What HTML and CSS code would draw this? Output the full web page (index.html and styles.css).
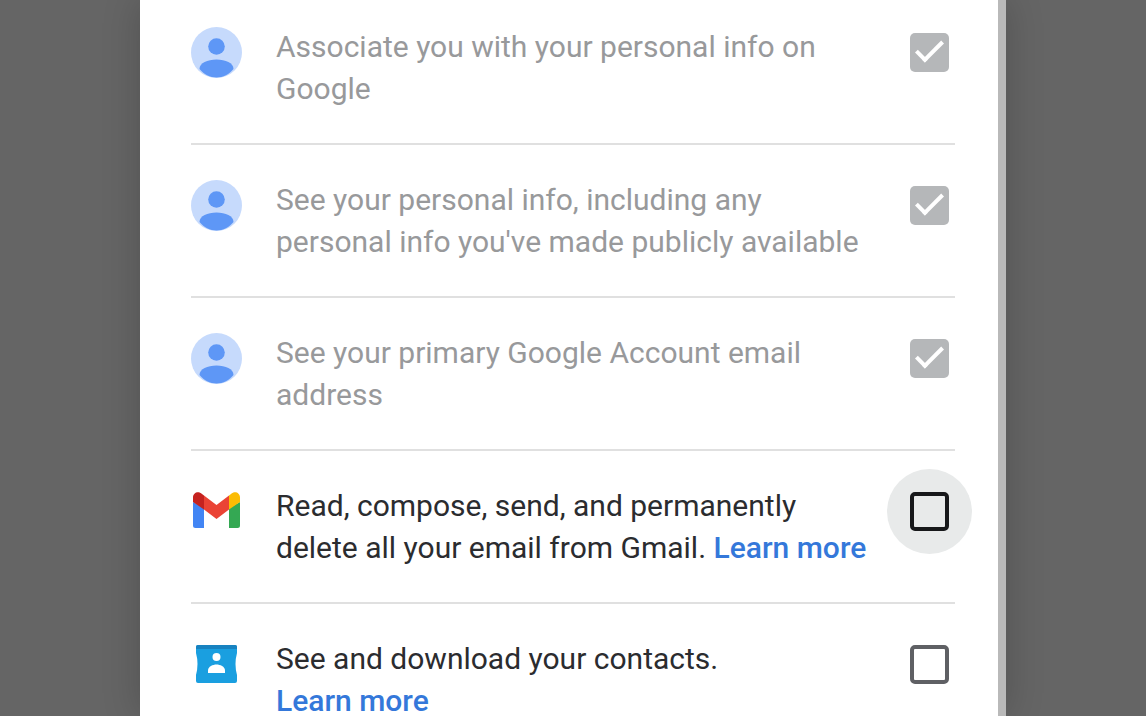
FILE: index.html
```
<!DOCTYPE html>
<html lang="en">
<head>
    <meta charset="UTF-8">
    <meta name="viewport" content="width=device-width, initial-scale=1">
    <title>Google Account access</title>

    <link rel="stylesheet" href="styles.css">

</head>
<body>

    <!-- shared by the three profile rows -->
    <svg class="defs" width="0" height="0" aria-hidden="true">
        <symbol id="icon-person" viewBox="0 0 51 51">
            <circle cx="25.5" cy="25.5" r="25.5" fill="#c6dafc"/>
            <g fill="#5e97f6">
                <circle cx="25.5" cy="19.5" r="8.3"/>
                <path d="M8.500 42c0-6 8-9.500 17-9.500s17 3.500 17 9.500c-4 5-10.500 8.500-17 8.500S12.500 47 8.500 42z"/>
            </g>
        </symbol>
    </svg>

    <main class="dialog">
        <ul class="scopes">
            <li class="scope disabled">
                <svg class="icon" aria-hidden="true"><use href="#icon-person"/></svg>
                <div class="text"><label for="scope-openid">Associate you with your personal info on Google</label></div>
                <span class="check"><input type="checkbox" id="scope-openid" checked disabled></span>
            </li>
            <li class="scope disabled">
                <svg class="icon" aria-hidden="true"><use href="#icon-person"/></svg>
                <div class="text"><label for="scope-profile">See your personal info, including any personal info you've made publicly available</label></div>
                <span class="check"><input type="checkbox" id="scope-profile" checked disabled></span>
            </li>
            <li class="scope disabled">
                <svg class="icon" aria-hidden="true"><use href="#icon-person"/></svg>
                <div class="text"><label for="scope-email">See your primary Google Account email address</label></div>
                <span class="check"><input type="checkbox" id="scope-email" checked disabled></span>
            </li>
            <li class="scope">
                <svg class="icon" viewBox="0 0 51 51" aria-hidden="true">
                    <path fill="#4285f4" d="M2 16v23.500a2.500 2.500 0 0 0 2.500 2.500H13V22z"/>
                    <path fill="#34a853" d="M38 22v20h8.500a2.500 2.500 0 0 0 2.500-2.500V16z"/>
                    <path fill="#ea4335" d="M13 23.500V9.500l12.500 9.500L38 9.500v14l-12.500 9.500z"/>
                    <path fill="#c5221f" d="M2 11.500v4.500l11 7.500V9.500l-2-1.500C7.500 4.500 2 6.500 2 11.500z"/>
                    <path fill="#fbbc04" d="M49 11.500v4.500l-11 7.500V9.500l2-1.500c3.500-3.500 9-1.500 9 3.500z"/>
                </svg>
                <div class="text"><label for="scope-gmail">Read, compose, send, and permanently delete all your email from Gmail.</label> <a href="#">Learn more</a></div>
                <span class="check focused"><input type="checkbox" id="scope-gmail"></span>
            </li>
            <li class="scope">
                <svg class="icon" viewBox="0 0 51 51" aria-hidden="true">
                    <path fill="#1a9fe0" d="M7 6h37a2 2 0 0 1 2 2v6q-3 11 0 22v6a2 2 0 0 1-2 2H7a2 2 0 0 1-2-2v-6q3-11 0-22V8a2 2 0 0 1 2-2z"/>
                    <path fill="#1782c0" d="M7 6h37a2 2 0 0 1 2 2v2H5V8a2 2 0 0 1 2-2z"/>
                    <circle cx="25.500" cy="18" r="4" fill="#fff"/>
                    <path fill="#fff" d="M17 34v-2.500c0-4 5-6 8.500-6s8.500 2 8.500 6V34z"/>
                </svg>
                <div class="text"><label for="scope-contacts">See and download your contacts.</label> <a href="#">Learn more</a></div>
                <span class="check"><input type="checkbox" id="scope-contacts"></span>
            </li>
        </ul>
    </main>

</body>
</html>
```
FILE: styles.css
```
*, *::before, *::after {
    box-sizing: border-box;
}
body {
    margin: 0;
    height: 100vh;
    overflow: hidden;
    background-color: #656565;
    color: #2b2c2f;
    font-family: Roboto, 'Liberation Sans', sans-serif;
    font-size: 30px;
    line-height: 42px;
}
.defs {
    position: absolute;
}
.dialog {
    max-width: 866px;
    height: 100%;
    overflow: hidden;
    margin: 0 auto;
    padding: 0 43px 0 51px;
    background-color: white;
    /* scroll track */
    border-right: 8px solid #b9b9b9;
    box-shadow: 0 0 36px rgba(0,0,0,.2);
}
.scopes {
    margin: 0;
    padding: 0;
    list-style: none;
}
.scope {
    display: flex;
    align-items: flex-start;
    padding: 34px 6px 33px 0;
    border-bottom: 2px solid #e0e0e0;
}
.scope:first-child {
    padding-top: 26px;
}
.scope:last-child {
    padding-bottom: 0;
    border-bottom: none;
}
.icon {
    flex: none;
    width: 51px;
    height: 51px;
    margin: 1px 34px 0 0;
}
.text {
    flex: 1;
    margin-right: 38px;
}
.disabled .text {
    color: #98999b;
}
a {
    color: #3478da;
    font-weight: 500;
    text-decoration: none;
    white-space: nowrap;
}
.check {
    position: relative;
    flex: none;
    display: flex;
    margin-top: 7px;
}
.check input {
    position: relative;
    appearance: none;
    width: 39px;
    height: 39px;
    margin: 0;
    border: 4px solid #5f6064;
    border-radius: 5px;
}
.check input:checked {
    border: none;
    background-color: #b5b7b9;
}
.check input:checked::after {
    content: '';
    position: absolute;
    left: 6px;
    top: 8px;
    width: 27px;
    height: 14px;
    border: solid white;
    border-width: 0 0 4px 4px;
    transform: rotate(-45deg);
}
/* focus ring behind the box */
.focused::before {
    content: '';
    position: absolute;
    inset: -23px;
    border-radius: 50%;
    background-color: #e8eaea;
}
.focused input {
    border-color: #17181a;
}
```
